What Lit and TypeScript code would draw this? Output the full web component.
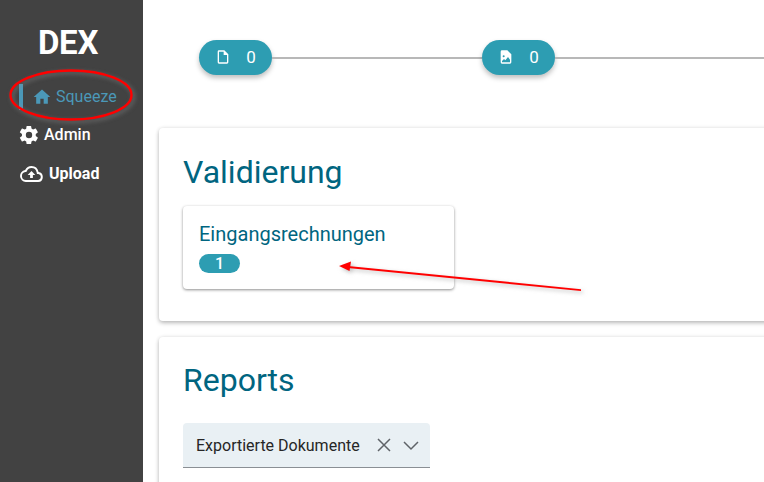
import { LitElement, html, css } from "lit";
import { customElement } from "lit/decorators.js";

@customElement("app-root")
export class AppRoot extends LitElement {
  static styles = css`
    :host {
      display: block;
      height: 482px;
      overflow: hidden;
      position: relative;
      font-family: Roboto, "Liberation Sans", sans-serif;
      background: #fff;
    }
    .page {
      display: flex;
      height: 482px;
    }
    .side {
      width: 143px;
      flex: none;
      background: #424242;
      color: #fff;
      box-sizing: border-box;
    }
    .logo {
      font-size: 33px;
      font-weight: 700;
      line-height: 38px;
      text-align: center;
      padding: 24px 0 0 0;
      margin-left: -7px;
      letter-spacing: -0.3px;
    }
    .nav {
      display: flex;
      flex-direction: column;
      margin-top: 22px;
    }
    .item {
      display: flex;
      align-items: center;
      font-size: 16px;
      line-height: 24px;
      height: 24px;
    }
    .active {
      color: #4b98b8;
      margin-left: 19px;
      border-left: 4px solid #4b98b8;
      height: 26px;
      padding-left: 9px;
      gap: 4px;
    }
    .admin {
      margin: 13px 0 0 19px;
      gap: 5px;
      font-weight: 500;
    }
    .upload {
      margin: 15px 0 0 20px;
      gap: 6px;
      font-weight: 700;
    }
    .main {
      flex: 1;
      min-width: 0;
      padding: 40px 0 0 16px;
      box-sizing: border-box;
    }
    .steps {
      display: flex;
      align-items: center;
      height: 35px;
      padding-left: 40px;
      margin-bottom: 53px;
      width: 800px;
    }
    .pill {
      flex: none;
      width: 73px;
      height: 35px;
      padding-bottom: 2px;
      box-sizing: border-box;
      border-radius: 18px;
      background: #2d9db2;
      color: #fff;
      display: flex;
      align-items: center;
      justify-content: center;
      gap: 15px;
      font-size: 17px;
      font-weight: 400;
      box-shadow: 0 3px 5px rgba(0, 0, 0, 0.25);
    }
    .line {
      flex: none;
      width: 210px;
      height: 2px;
      background: #b8b8b8;
    }
    .line.last {
      width: 300px;
    }
    .panel {
      width: 640px;
      background: #fff;
      border-radius: 4px;
      box-shadow: 0 2px 4px rgba(0, 0, 0, 0.25), 0 0 4px rgba(0, 0, 0, 0.08);
      padding: 24px 24px 32px 24px;
      box-sizing: border-box;
      margin-bottom: 16px;
    }
    h2 {
      margin: 0;
      font-size: 32px;
      font-weight: 400;
      line-height: 40px;
      color: #006580;
    }
    .reports h2 {
      line-height: 38px;
    }
    .card {
      width: 271px;
      height: 83px;
      margin-top: 14px;
      padding: 15px 16px 0 16px;
      box-sizing: border-box;
      border-radius: 4px;
      box-shadow: 0 1px 3px rgba(0, 0, 0, 0.45);
    }
    .card-title {
      color: #006580;
      font-size: 20px;
      line-height: 26px;
    }
    .badge {
      width: 41px;
      height: 19px;
      margin-top: 7px;
      border-radius: 10px;
      background: #2d9db2;
      color: #fff;
      font-size: 16px;
      font-weight: 500;
      line-height: 19px;
      text-align: center;
    }
    .select {
      width: 247px;
      height: 45px;
      margin-top: 24px;
      background: #e9f0f4;
      border-radius: 4px 4px 0 0;
      border-bottom: 1px solid #8a8f94;
      box-sizing: border-box;
      display: flex;
      align-items: center;
      padding-left: 13px;
      color: #262626;
      font-size: 16px;
    }
    .select span {
      flex: 1;
    }
    .select svg {
      flex: none;
    }
    .clear,
    .chevron {
      margin-right: 11px;
    }
    .marks {
      position: absolute;
      left: 0;
      top: 0;
      pointer-events: none;
      filter: drop-shadow(2px 2px 2px rgba(140, 140, 140, 0.6));
    }
  `;

  render() {
    return html`
      <div class="page">
        <aside class="side">
          <div class="logo">DEX</div>
          <nav class="nav">
            <div class="item active">
              <svg width="20" height="20" viewBox="0 0 24 24" fill="#4b98b8"><path d="M10 20v-6h4v6h5v-8h3L12 3 2 12h3v8z" /></svg>
              Squeeze
            </div>
            <div class="item admin">
              <svg width="20" height="20" viewBox="1 1 22 22" fill="#fff"><path d="M19.4 13c.04-.33.06-.66.06-1s-.02-.67-.06-1l2.15-1.68a.5.5 0 0 0 .12-.64l-2.04-3.53a.5.5 0 0 0-.62-.22l-2.54 1.02a7.5 7.5 0 0 0-1.73-1L14.36 2.4a.5.5 0 0 0-.5-.4H9.8a.5.5 0 0 0-.5.42L8.92 5a7.8 7.8 0 0 0-1.73 1L4.65 4.96a.5.5 0 0 0-.62.22L2 8.7a.5.5 0 0 0 .12.64L4.27 11a7.9 7.9 0 0 0 0 2l-2.15 1.68a.5.5 0 0 0-.12.64l2.03 3.53c.13.22.39.3.62.22l2.54-1.02c.53.4 1.1.74 1.73 1l.38 2.55c.05.24.25.4.5.4h4.06c.25 0 .46-.16.5-.42l.38-2.55a7.5 7.5 0 0 0 1.73-1l2.54 1.02c.23.08.49 0 .62-.22l2.04-3.53a.5.5 0 0 0-.12-.64zM12 15.5a3.5 3.5 0 1 1 0-7 3.5 3.5 0 0 1 0 7z" /></svg>
              Admin
            </div>
            <div class="item upload">
              <svg width="23" height="20" viewBox="0 2 24 20" preserveAspectRatio="none" fill="#fff"><path d="M19.35 10.04A7.49 7.49 0 0 0 12 4a7.5 7.5 0 0 0-6.65 4.04A6 6 0 0 0 6 20h13a5 5 0 0 0 .35-9.96zM19 18H6a4 4 0 0 1-.44-7.97l1.07-.11.5-.95A5.46 5.46 0 0 1 12 6a5.5 5.5 0 0 1 5.39 4.43l.3 1.5 1.53.11A3 3 0 0 1 19 18zM8 13h2.55v3h2.9v-3H16l-4-4z" /></svg>
              Upload
            </div>
          </nav>
        </aside>
        <main class="main">
          <div class="steps">
            <div class="pill">
              <svg width="16" height="16" viewBox="0 0 24 24" fill="#fff"><path d="M14 2H6a2 2 0 0 0-2 2v16a2 2 0 0 0 2 2h12a2 2 0 0 0 2-2V8zm4 18H6V4h7v5h5z" /></svg>
              0
            </div>
            <div class="line"></div>
            <div class="pill">
              <svg width="16" height="16" viewBox="0 0 24 24" fill="#fff"><path d="M14 2H6a2 2 0 0 0-2 2v16a2 2 0 0 0 2 2h12a2 2 0 0 0 2-2V8zM8.5 9.5A1.5 1.5 0 1 1 8.5 12.5 1.5 1.5 0 0 1 8.5 9.5zM18 20H6v-2l3-3 2 2 4-5 3 4z" /></svg>
              0
            </div>
            <div class="line last"></div>
          </div>
          <section class="panel">
            <h2>Validierung</h2>
            <div class="card">
              <div class="card-title">Eingangsrechnungen</div>
              <div class="badge">1</div>
            </div>
          </section>
          <section class="panel reports">
            <h2>Reports</h2>
            <div class="select">
              <span>Exportierte Dokumente</span>
              <svg class="clear" width="16" height="16" viewBox="0 0 16 16" fill="none" stroke="#5f6368" stroke-width="1.5"><path d="M2 2l12 12M14 2L2 14" /></svg>
              <svg class="chevron" width="16" height="16" viewBox="0 0 16 16" fill="none" stroke="#5f6368" stroke-width="1.5"><path d="M1 5l7 7 7-7" /></svg>
            </div>
          </section>
        </main>
      </div>
      <svg class="marks" width="764" height="482" viewBox="0 0 764 482" fill="none">
        <ellipse cx="71" cy="95" rx="60.5" ry="24.5" stroke="#ff0000" stroke-width="2.4" />
        <path d="M348 265.9L581 289.2L581 291L348 268.1z" fill="#ff0000" />
        <path d="M339 266L351 261.5L349.5 271z" fill="#ff0000" />
      </svg>
    `;
  }
}
